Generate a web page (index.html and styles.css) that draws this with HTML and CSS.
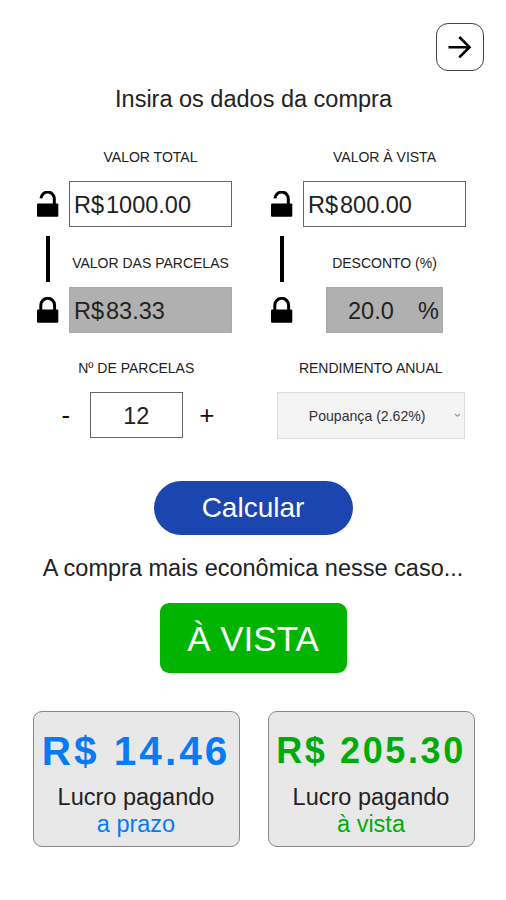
FILE: index.html
```
<!DOCTYPE html>
<html lang="pt-BR">
<head>
	<meta charset="utf-8">
	<meta name="viewport" content="width=device-width, initial-scale=1">
	<title>À vista ou a prazo</title>
	<link rel="stylesheet" href="styles.css">
</head>

<body>
	<svg class="defs" width="0" height="0">
		<symbol id="aberto" viewBox="0 0 22 27">
			<path d="M4 7.4A6.6 6.6 0 0 1 17.3 8V13" fill="none" stroke="#000" stroke-width="3"/>
			<rect x="0" y="12.4" width="21.3" height="13.4" rx="1"/>
		</symbol>
		<symbol id="fechado" viewBox="0 0 22 27">
			<path d="M3.8 13V8.2a6.9 6.9 0 0 1 13.8 0V13" fill="none" stroke="#000" stroke-width="3"/>
			<rect x="0" y="12.4" width="21.3" height="13.4" rx="1"/>
		</symbol>
	</svg>

	<div class="topo">
		<button class="avancar" aria-label="Avançar">
			<svg width="26" height="26" viewBox="0 0 26 26">
				<path d="M1.5 13.2H22.5M12.3 3L22.5 13.2L12.3 23.4" fill="none" stroke="#000" stroke-width="2.6"/>
			</svg>
		</button>
	</div>

	<h1>Insira os dados da compra</h1>

	<div class="valores">
		<div class="coluna">
			<label class="rotulo">VALOR TOTAL</label>
			<svg class="cadeado"><use href="#aberto"/></svg>
			<div class="campo"><span class="moeda">R$</span>1000.00</div>
			<div class="ligacao"></div>
			<label class="rotulo">VALOR DAS PARCELAS</label>
			<svg class="cadeado"><use href="#fechado"/></svg>
			<div class="campo bloqueado"><span class="moeda">R$</span>83.33</div>
		</div>
		<div class="coluna">
			<label class="rotulo">VALOR À VISTA</label>
			<svg class="cadeado"><use href="#aberto"/></svg>
			<div class="campo"><span class="moeda">R$</span>800.00</div>
			<div class="ligacao"></div>
			<label class="rotulo">DESCONTO (%)</label>
			<svg class="cadeado"><use href="#fechado"/></svg>
			<div class="campo bloqueado desconto"><span>20.0</span><span>%</span></div>
		</div>
	</div>

	<div class="opcoes">
		<div class="opcao">
			<label class="rotulo">Nº DE PARCELAS</label>
			<div class="contador">
				<button class="passo">-</button>
				<div class="campo parcelas">12</div>
				<button class="passo">+</button>
			</div>
		</div>
		<div class="opcao">
			<label class="rotulo">RENDIMENTO ANUAL</label>
			<div class="rendimento">
				<span>Poupança (2.62%)</span>
				<svg width="7" height="5" viewBox="0 0 7 5"><path d="M1 1L3.5 3.3L6 1" fill="none" stroke="#999" stroke-width="1.2"/></svg>
			</div>
		</div>
	</div>

	<button class="calcular">Calcular</button>

	<p class="frase">A compra mais econômica nesse caso...</p>
	<div class="resposta">À VISTA</div>

	<div class="lucros">
		<div class="lucro prazo">
			<h2>R$ 14.46</h2>
			<p>Lucro pagando<br><span>a prazo</span></p>
		</div>
		<div class="lucro vista">
			<h2>R$ 205.30</h2>
			<p>Lucro pagando<br><span>à vista</span></p>
		</div>
	</div>
</body>
</html>
```
FILE: styles.css
```
*{
	box-sizing: border-box;
}
body{
	margin: 0;
	height: 900px;
	background-color: white;
	color: #222;
	font-family: "Liberation Sans", Arial, sans-serif;
	font-size: 23.5px;
	overflow: hidden;
}
h1, h2, p{
	margin: 0;
	font-weight: normal;
}
button{
	padding: 0;
	border: none;
	background: none;
	font-family: inherit;
	cursor: pointer;
}
.defs{
	display: block;
}
.topo{
	display: flex;
	justify-content: flex-end;
	padding: 23px 22px 0 0;
}
.avancar{
	display: flex;
	align-items: center;
	justify-content: center;
	width: 48px;
	height: 48px;
	border: 1.5px solid #444;
	border-radius: 12px;
}
h1{
	margin-top: 14px;
	padding-left: 1px;
	font-size: 23.5px;
	line-height: 28px;
	text-align: center;
}
.valores{
	display: flex;
	gap: 39px;
	margin-top: 8px;
	padding-left: 37px;
}
.coluna{
	display: grid;
	grid-template-columns: 21px 163px;
	grid-template-rows: 60px 46px 60px 46px;
	column-gap: 11px;
}
.coluna .rotulo{
	grid-column: 2;
}
.rotulo{
	align-self: end;
	padding-bottom: 16px;
	font-size: 14px;
	line-height: 16px;
	text-align: center;
	white-space: nowrap;
}
.cadeado{
	align-self: center;
	width: 22px;
	height: 27px;
}
.campo{
	display: flex;
	align-items: center;
	height: 46px;
	padding: 2px 0 0 4px;
	border: 1px solid #666;
}
.moeda{
	margin-right: 2px;
}
.bloqueado{
	background-color: #b0b0b0;
	border-color: #a8a8a8;
}
.ligacao{
	align-self: center;
	justify-self: center;
	width: 4px;
	height: 46px;
	margin-top: 4px;
	background-color: #000;
}
.desconto{
	justify-self: center;
	justify-content: space-between;
	width: 117px;
	padding: 2px 3px 0 21px;
}
.opcoes{
	display: flex;
	padding-left: 19px;
}
.opcao{
	display: flex;
	flex-direction: column;
	align-items: center;
	width: 234.5px;
	padding-top: 27px;
}
.opcao .rotulo{
	align-self: center;
}
.contador{
	display: flex;
	align-items: center;
	gap: 14px;
}
.parcelas{
	justify-content: center;
	width: 93px;
	padding: 2px 0 0;
}
.passo{
	width: 20px;
	font-size: 26px;
	color: #111;
}
.rendimento{
	display: flex;
	align-items: center;
	justify-content: space-between;
	width: 188px;
	height: 47px;
	padding: 0 3px 0 31px;
	border: 1px solid #ddd;
	background-color: #f4f4f4;
	color: #333;
	font-size: 14.1px;
}
.calcular{
	display: block;
	width: 199px;
	height: 54px;
	margin: 42px auto 0;
	padding-bottom: 1px;
	border-radius: 27px;
	background-color: #1b46b0;
	color: white;
	font-size: 28px;
}
.frase{
	margin-top: 19px;
	line-height: 28px;
	text-align: center;
}
.resposta{
	width: 187px;
	height: 70px;
	margin: 21px auto 0;
	border-radius: 9px;
	background-color: #00b400;
	color: white;
	font-size: 35px;
	line-height: 71px;
	text-align: center;
}
.lucros{
	display: flex;
	justify-content: center;
	gap: 28px;
	margin-top: 38px;
	padding-left: 1px;
}
.lucro{
	width: 207px;
	height: 136px;
	padding-top: 15px;
	border: 1.5px solid #888;
	border-radius: 9px;
	background-color: #e8e8e8;
	line-height: 27px;
	text-align: center;
}
.lucro h2{
	height: 57px;
	font-weight: bold;
	line-height: 48px;
	white-space: nowrap;
}
.prazo h2{
	font-size: 40.5px;
	letter-spacing: 3px;
}
.vista h2{
	font-size: 36px;
	letter-spacing: 2.6px;
}
.prazo h2, .prazo span{
	color: #087af5;
}
.vista h2, .vista span{
	color: #00ab0a;
}
```
